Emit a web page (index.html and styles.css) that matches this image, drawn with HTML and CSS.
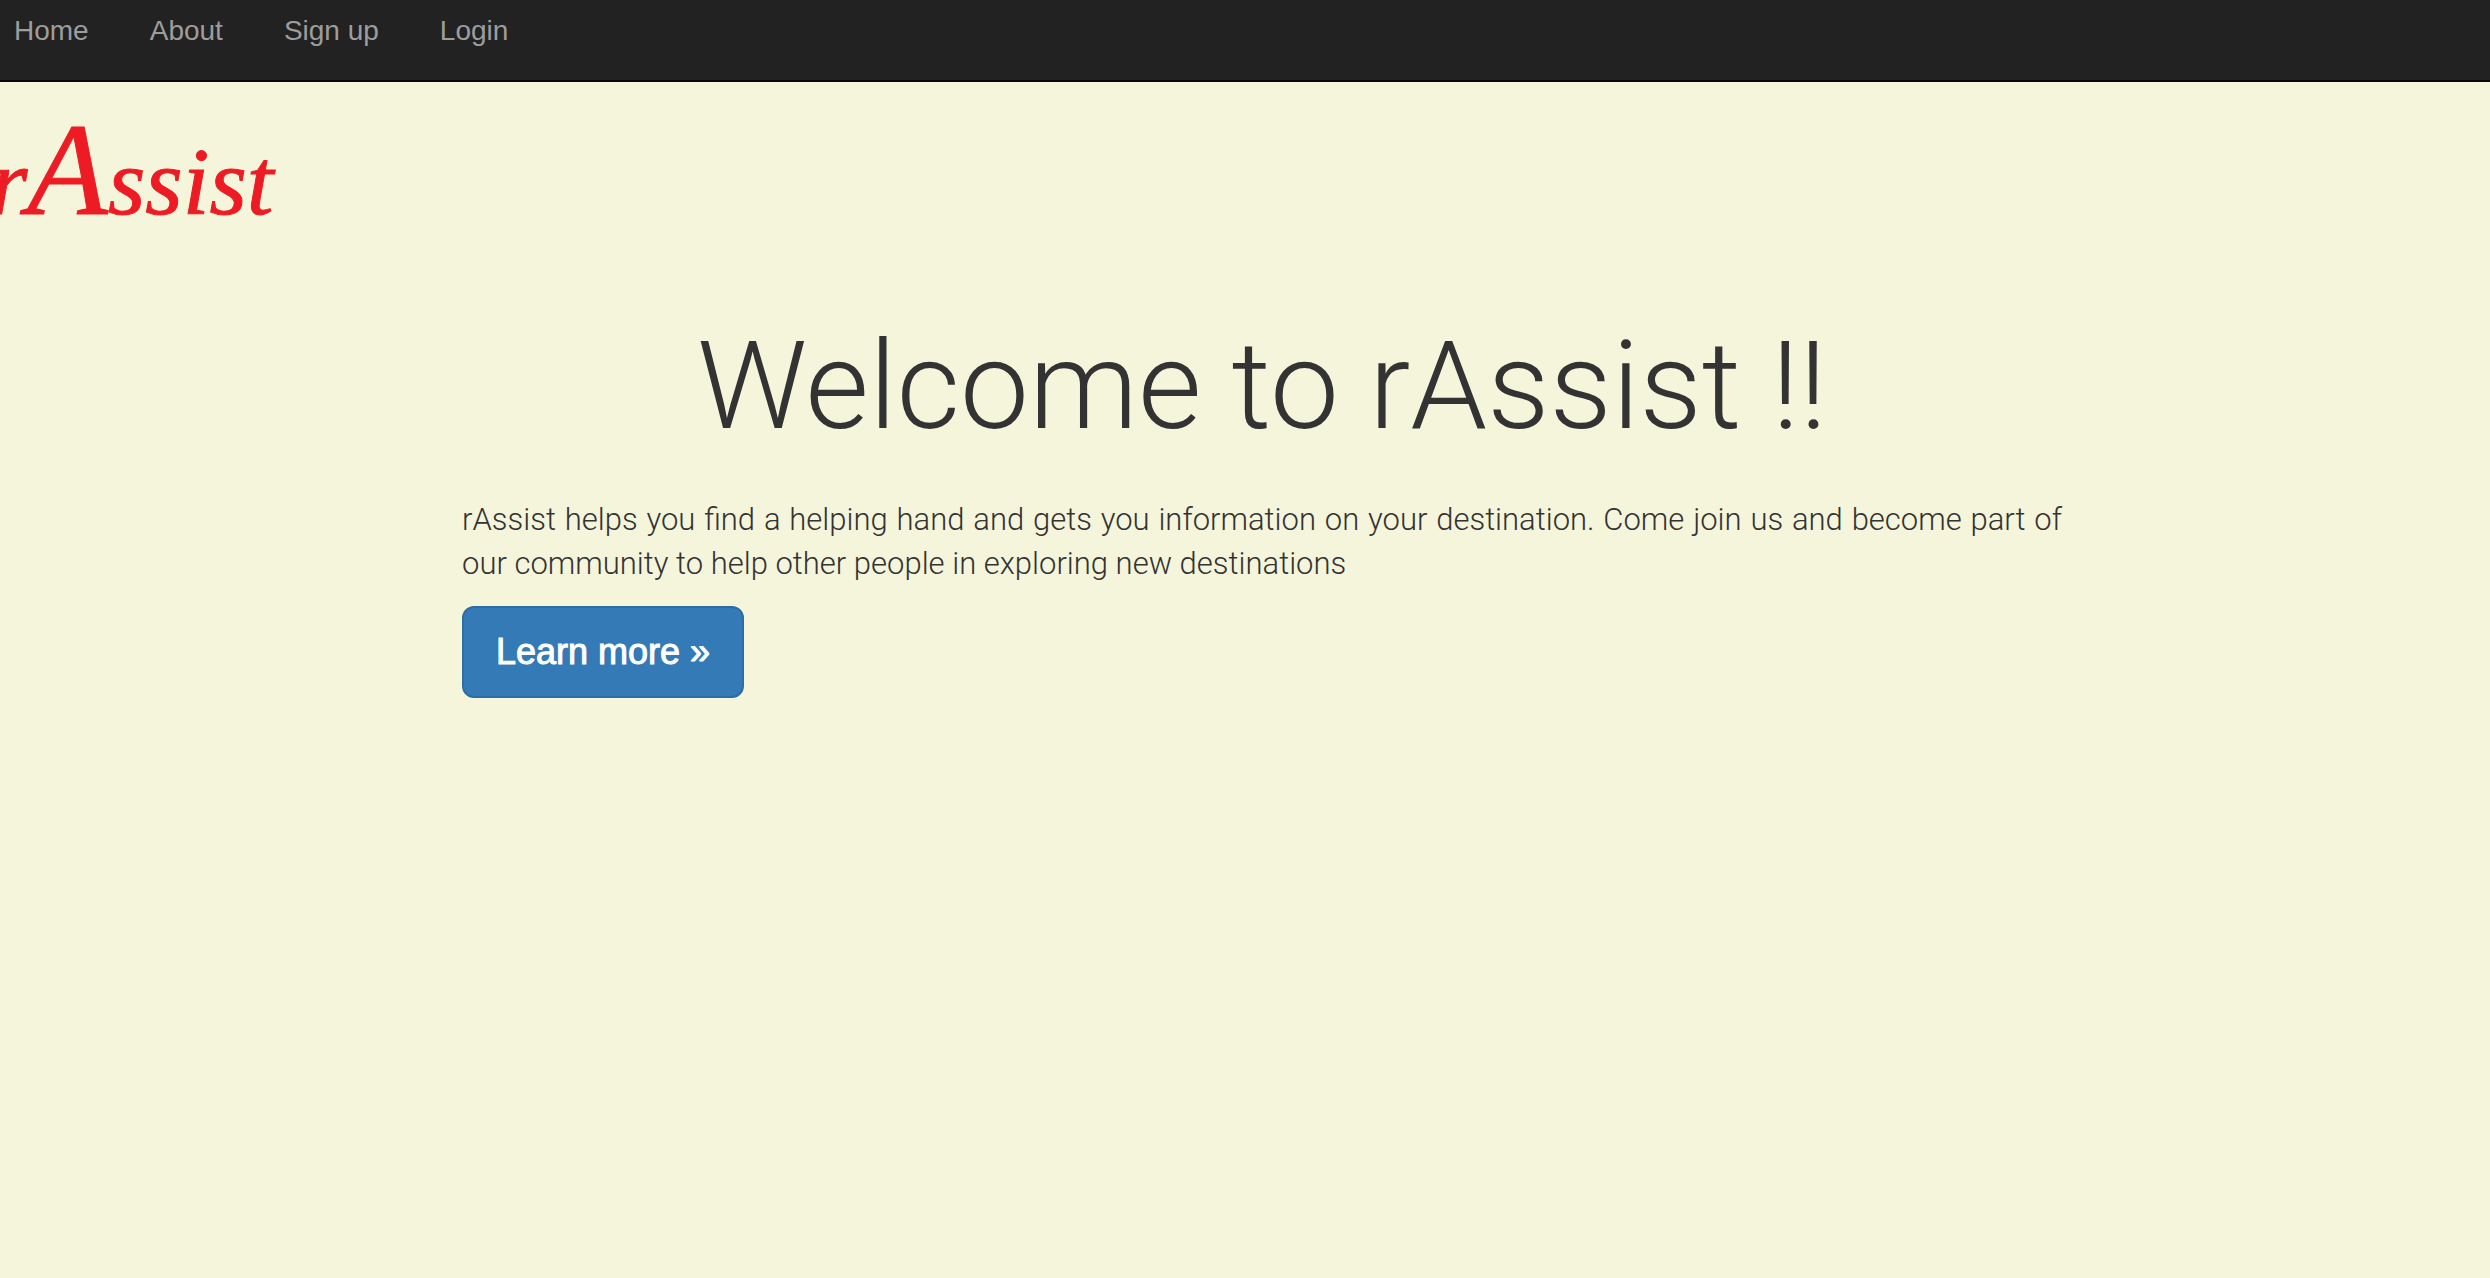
FILE: index.html
```html
<!DOCTYPE html>
<html lang="en">
<head>
<meta charset="utf-8">
<meta name="viewport" content="width=device-width, initial-scale=1">
<title>rAssist</title>
<link rel="stylesheet" href="styles.css">
</head>
<body>
<nav class="navbar">
  <ul class="navbar-list">
    <li><a class="navbar-link" href="#">Home</a></li>
    <li><a class="navbar-link" href="#about">About</a></li>
    <li><a class="navbar-link" href="#signup">Sign up</a></li>
    <li><a class="navbar-link" href="#login">Login</a></li>
  </ul>
</nav>
<header class="brand">
  <span class="brand-name">r<span class="brand-initial">A</span>ssist</span>
</header>
<main class="hero">
  <h1 class="hero-title">Welcome to rAssist !!</h1>
  <p class="hero-text">rAssist helps you find a helping hand and gets you information on your destination. Come join us and become part of our community to help other people in exploring new destinations</p>
  <a class="hero-button" href="#about">Learn more »</a>
</main>
</body>
</html>
```
FILE: styles.css
```css
* {
  box-sizing: border-box;
}

body {
  margin: 0;
  background: #f5f5dc;
  color: #333;
  font-family: "Liberation Sans", Arial, sans-serif;
  overflow-x: hidden;
}

.navbar {
  min-height: 82px;
  padding: 11px 14px;
  background: #222;
  border-bottom: 2px solid #080808;
}

.navbar-list {
  display: flex;
  gap: 61px;
  margin: 0;
  padding: 0;
  list-style: none;
}

.navbar-link {
  color: #9d9d9d;
  font-size: 28px;
  line-height: 40px;
  text-decoration: none;
}

.brand {
  height: 220px;
  padding-top: 28px;
}

.brand-name {
  display: block;
  margin-left: -10px;
  color: #ed1c24;
  font-family: "Liberation Serif", "Times New Roman", serif;
  font-size: 96px;
  font-style: italic;
  line-height: 120px;
  -webkit-text-stroke: 1px #ed1c24;
}

.brand-initial {
  font-size: 132px;
}

.hero {
  padding: 0 428px 0 462px;
}

.hero-title {
  margin: 0 0 28px;
  font-family: Roboto, "Helvetica Neue", sans-serif;
  font-size: 123px;
  font-weight: 300;
  line-height: 168px;
  text-align: center;
}

.hero-text {
  margin: 0 0 20px;
  font-family: Roboto, "Helvetica Neue", sans-serif;
  font-size: 31px;
  font-weight: 300;
  line-height: 44px;
  text-align: justify;
}

.hero-button {
  display: inline-block;
  padding: 20px 32px;
  border: 2px solid #2e6da4;
  border-radius: 12px;
  background: #337ab7;
  color: #fff;
  font-size: 36px;
  line-height: 48px;
  text-decoration: none;
  -webkit-text-stroke: 1px #fff;
}
```
